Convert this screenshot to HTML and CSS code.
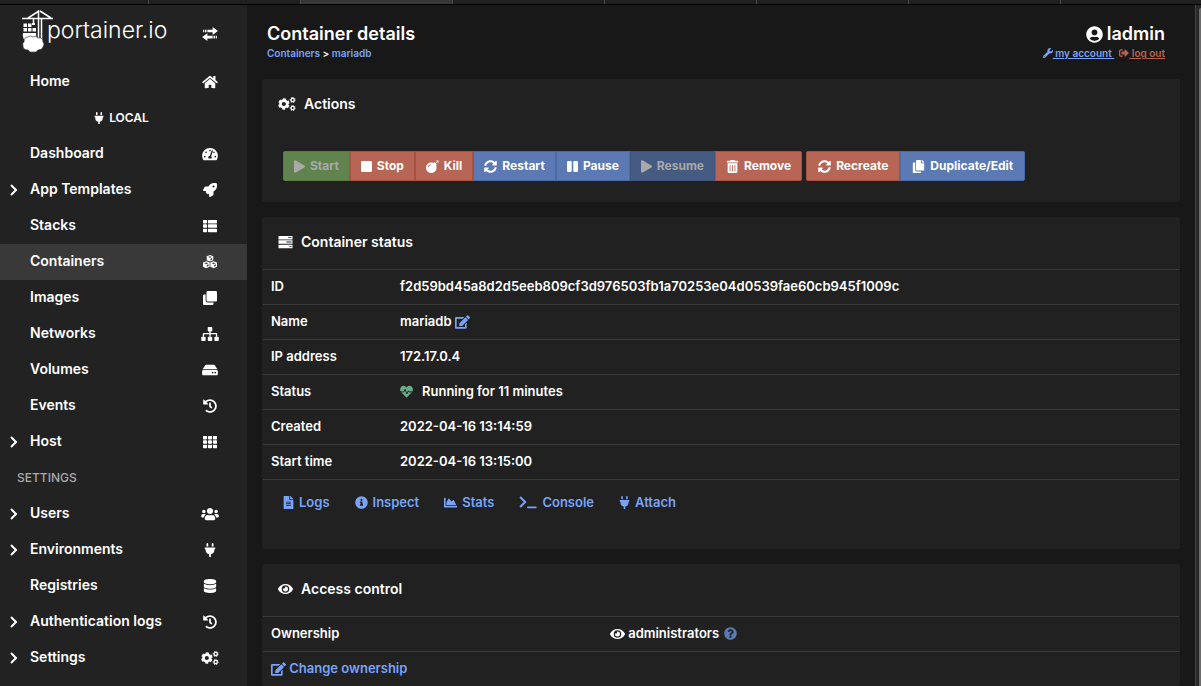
FILE: index.html
```html
<!DOCTYPE html>
<html lang="en">
<head>
<meta charset="utf-8">
<meta name="viewport" content="width=device-width, initial-scale=1">
<title>Container details - Portainer</title>
<link rel="stylesheet" href="styles.css">
</head>
<body>
<svg class="sprite" aria-hidden="true">
  <symbol id="plug" viewBox="0 0 384 512"><path d="M320,32a32,32,0,0,0-64,0v96h64Zm48,128H16A16,16,0,0,0,0,176v32a16,16,0,0,0,16,16H32v32A160.07,160.07,0,0,0,160,412.8V512h64V412.8A160.07,160.07,0,0,0,352,256V224h16a16,16,0,0,0,16-16V176A16,16,0,0,0,368,160ZM128,32a32,32,0,0,0-64,0v96h64Z"/></symbol>
  <symbol id="home" viewBox="0 0 576 512"><path d="M280.37 148.26L96 300.11V464a16 16 0 0 0 16 16l112.06-.29a16 16 0 0 0 15.92-16V368a16 16 0 0 1 16-16h64a16 16 0 0 1 16 16v95.64a16 16 0 0 0 16 16.05L464 480a16 16 0 0 0 16-16V300L295.67 148.26a12.19 12.19 0 0 0-15.3 0zM571.6 251.47L488 182.56V44.05a12 12 0 0 0-12-12h-56a12 12 0 0 0-12 12v72.61L318.47 43a48 48 0 0 0-61 0L4.34 251.47a12 12 0 0 0-1.6 16.9l25.5 31A12 12 0 0 0 45.15 301l235.22-193.74a12.19 12.19 0 0 1 15.3 0L530.9 301a12 12 0 0 0 16.9-1.6l25.5-31a12 12 0 0 0-1.7-16.93z"/></symbol>
  <symbol id="gauge" viewBox="0 0 576 512"><path d="M288 32C128.94 32 0 160.94 0 320c0 52.8 14.25 102.26 39.06 144.8 5.61 9.62 16.3 15.2 27.44 15.2h443c11.14 0 21.83-5.58 27.44-15.2C561.75 422.26 576 372.8 576 320c0-159.06-128.94-288-288-288zm0 64c14.71 0 26.58 10.13 30.32 23.65-1.11 2.26-2.64 4.23-3.45 6.67l-9.22 27.67c-5.13 3.49-10.97 6.01-17.64 6.01-17.67 0-32-14.33-32-32S270.33 96 288 96zM96 384c-17.67 0-32-14.33-32-32s14.33-32 32-32 32 14.33 32 32-14.33 32-32 32zm48-160c-17.67 0-32-14.33-32-32s14.33-32 32-32 32 14.33 32 32-14.33 32-32 32zm246.77-72.41l-61.33 184C343.13 347.33 352 364.54 352 384c0 11.72-3.38 22.55-8.88 32H232.88c-5.5-9.45-8.88-20.28-8.88-32 0-33.94 26.5-61.43 59.9-63.59l61.34-184.01c4.17-12.56 17.73-19.45 30.36-15.17 12.57 4.19 19.35 17.79 15.17 30.36zm14.66 57.2l15.52-46.55c3.47-1.29 7.13-2.23 11.05-2.23 17.67 0 32 14.33 32 32s-14.33 32-32 32c-11.38-.01-21.37-5.97-26.57-15.22zM480 384c-17.67 0-32-14.33-32-32s14.33-32 32-32 32 14.33 32 32-14.33 32-32 32z"/></symbol>
  <symbol id="rocket" viewBox="0 0 512 512"><path d="M505.12 19.09c-1.19-5.53-6.66-11-12.2-12.18C460.71 0 435.5 0 410.4 0 307.17 0 245.27 55.2 199.05 128H94.83c-16.34.01-35.55 11.87-42.88 26.48L2.51 253.29A28.4 28.4 0 0 0 0 264a24 24 0 0 0 24 24h103.81l-22.47 22.46c-11.36 11.37-13 32.26 0 45.25l50.9 50.91c11.16 11.19 32.16 13.16 45.28 0l22.47-22.46V488a24 24 0 0 0 24 24 28.56 28.56 0 0 0 10.71-2.51l98.73-49.39c14.63-7.3 26.51-26.5 26.51-42.86V312.79c72.6-46.31 128.03-108.4 128.03-211.09.1-25.2.1-50.4-6.85-82.61zM384.04 168A40 40 0 1 1 424.05 128a40.02 40.02 0 0 1-40.01 40z"/></symbol>
  <symbol id="list" viewBox="0 0 512 512"><path d="M24 32h101a24 24 0 0 1 24 24v80a24 24 0 0 1-24 24H24a24 24 0 0 1-24-24V56a24 24 0 0 1 24-24zM205 32h283a24 24 0 0 1 24 24v80a24 24 0 0 1-24 24H205a24 24 0 0 1-24-24V56a24 24 0 0 1 24-24zM24 192h101a24 24 0 0 1 24 24v80a24 24 0 0 1-24 24H24a24 24 0 0 1-24-24v-80a24 24 0 0 1 24-24zM205 192h283a24 24 0 0 1 24 24v80a24 24 0 0 1-24 24H205a24 24 0 0 1-24-24v-80a24 24 0 0 1 24-24zM24 352h101a24 24 0 0 1 24 24v80a24 24 0 0 1-24 24H24a24 24 0 0 1-24-24v-80a24 24 0 0 1 24-24zM205 352h283a24 24 0 0 1 24 24v80a24 24 0 0 1-24 24H205a24 24 0 0 1-24-24v-80a24 24 0 0 1 24-24z"/></symbol>
  <symbol id="grid" viewBox="0 0 512 512"><path d="M24 32h101a24 24 0 0 1 24 24v80a24 24 0 0 1-24 24H24a24 24 0 0 1-24-24V56a24 24 0 0 1 24-24zM205 32h102a24 24 0 0 1 24 24v80a24 24 0 0 1-24 24H205a24 24 0 0 1-24-24V56a24 24 0 0 1 24-24zM387 32h101a24 24 0 0 1 24 24v80a24 24 0 0 1-24 24H387a24 24 0 0 1-24-24V56a24 24 0 0 1 24-24zM24 192h101a24 24 0 0 1 24 24v80a24 24 0 0 1-24 24H24a24 24 0 0 1-24-24v-80a24 24 0 0 1 24-24zM205 192h102a24 24 0 0 1 24 24v80a24 24 0 0 1-24 24H205a24 24 0 0 1-24-24v-80a24 24 0 0 1 24-24zM387 192h101a24 24 0 0 1 24 24v80a24 24 0 0 1-24 24H387a24 24 0 0 1-24-24v-80a24 24 0 0 1 24-24zM24 352h101a24 24 0 0 1 24 24v80a24 24 0 0 1-24 24H24a24 24 0 0 1-24-24v-80a24 24 0 0 1 24-24zM205 352h102a24 24 0 0 1 24 24v80a24 24 0 0 1-24 24H205a24 24 0 0 1-24-24v-80a24 24 0 0 1 24-24zM387 352h101a24 24 0 0 1 24 24v80a24 24 0 0 1-24 24H387a24 24 0 0 1-24-24v-80a24 24 0 0 1 24-24z"/></symbol>
  <symbol id="cubes" viewBox="0 0 512 512"><path fill-rule="evenodd" d="M256 0l120 46v142l-120 54-120-54V46zM256 50l-70 25 70 26 70-26zM276 138v62l60-28v-60z"/><path fill-rule="evenodd" d="M122 232l122 46v148l-122 60L0 426V278zM122 278l-74 27 74 28 74-28zM142 368v66l60-32v-60z"/><path fill-rule="evenodd" d="M390 232l122 46v148l-122 60-122-60V278zM390 278l-74 27 74 28 74-28zM410 368v66l60-32v-60z"/></symbol>
  <symbol id="clone" viewBox="0 0 512 512"><path d="M464 0c26.51 0 48 21.49 48 48v288c0 26.51-21.49 48-48 48H176c-26.51 0-48-21.49-48-48V48c0-26.51 21.49-48 48-48h288M176 416c-44.112 0-80-35.888-80-80V128H48c-26.51 0-48 21.49-48 48v288c0 26.51 21.49 48 48 48h288c26.51 0 48-21.49 48-48v-48H176z"/></symbol>
  <symbol id="sitemap" viewBox="0 0 640 512"><rect x="236" width="168" height="160" rx="30"/><rect y="352" width="160" height="160" rx="30"/><rect x="240" y="352" width="160" height="160" rx="30"/><rect x="480" y="352" width="160" height="160" rx="30"/><path d="M80 360V256q0-14 14-14h452q14 0 14 14v104M320 150v210" fill="none" stroke="currentColor" stroke-width="48"/></symbol>
  <symbol id="drive" viewBox="0 0 576 512"><path d="M576 304v96c0 26.51-21.49 48-48 48H48c-26.51 0-48-21.49-48-48v-96c0-26.51 21.49-48 48-48h480c26.51 0 48 21.49 48 48zm-48-80a79.557 79.557 0 0 1 30.777 6.165L462.25 85.374A48.003 48.003 0 0 0 422.311 64H153.689a48 48 0 0 0-39.938 21.374L17.223 230.165A79.557 79.557 0 0 1 48 224h480zm-48 96c-17.673 0-32 14.327-32 32s14.327 32 32 32 32-14.327 32-32-14.327-32-32-32zm-96 0c-17.673 0-32 14.327-32 32s14.327 32 32 32 32-14.327 32-32-14.327-32-32-32z"/></symbol>
  <symbol id="history" viewBox="0 0 512 512"><path d="M504 255.531c.253 136.64-111.18 248.372-247.82 248.468-59.015.042-113.223-20.53-155.822-54.911-11.077-8.94-11.905-25.541-1.839-35.607l11.267-11.267c8.609-8.609 22.353-9.551 31.891-1.984C173.062 425.135 212.781 440 256 440c101.705 0 184-82.311 184-184 0-101.705-82.311-184-184-184-48.814 0-93.149 18.969-126.068 49.932l50.754 50.754c10.08 10.08 2.941 27.314-11.313 27.314H24c-8.837 0-16-7.163-16-16V38.627c0-14.254 17.234-21.393 27.314-11.314l49.372 49.372C129.209 34.136 189.552 8 256 8c136.81 0 247.747 110.78 248 247.531zm-180.912 78.784l9.823-12.63c8.138-10.463 6.253-25.542-4.21-33.679L288 256.349V152c0-13.255-10.745-24-24-24h-16c-13.255 0-24 10.745-24 24v135.651l65.409 50.874c10.463 8.137 25.541 6.253 33.679-4.21z"/></symbol>
  <symbol id="database" viewBox="0 0 448 512"><path d="M448 73.143v45.714C448 159.143 347.667 192 224 192S0 159.143 0 118.857V73.143C0 32.857 100.333 0 224 0s224 32.857 224 73.143zM448 176v102.857C448 319.143 347.667 352 224 352S0 319.143 0 278.857V176c48.125 33.143 136.208 48.572 224 48.572S399.874 209.143 448 176zm0 160v102.857C448 479.143 347.667 512 224 512S0 479.143 0 438.857V336c48.125 33.143 136.208 48.572 224 48.572S399.874 369.143 448 336z"/></symbol>
  <symbol id="users" viewBox="0 0 640 512"><path d="M96 224c35.3 0 64-28.7 64-64s-28.7-64-64-64-64 28.7-64 64 28.7 64 64 64zm448 0c35.3 0 64-28.7 64-64s-28.7-64-64-64-64 28.7-64 64 28.7 64 64 64zm32 32h-64c-17.6 0-33.5 7.1-45.1 18.6 40.3 22.1 68.9 62 75.1 109.4h66c17.7 0 32-14.3 32-32v-32c0-35.3-28.7-64-64-64zm-256 0c61.9 0 112-50.1 112-112S381.9 32 320 32 208 82.1 208 144s50.1 112 112 112zm76.8 32h-8.3c-20.8 10-43.9 16-68.5 16s-47.6-6-68.5-16h-8.3C179.6 288 128 339.6 128 403.2V432c0 26.5 21.5 48 48 48h288c26.5 0 48-21.5 48-48v-28.8c0-63.6-51.6-115.2-115.2-115.2zm-223.7-13.4C161.5 263.1 145.6 256 128 256H64c-35.3 0-64 28.7-64 64v32c0 17.7 14.3 32 32 32h65.9c6.3-47.4 34.9-87.3 75.2-109.4z"/></symbol>
  <symbol id="cogs" viewBox="0 0 640 512"><g fill="none" stroke="currentColor"><circle cx="204" cy="256" r="124" stroke-width="96"/><circle cx="204" cy="256" r="182" stroke-width="52" pathLength="12" stroke-dasharray="1.200 .8" stroke-dashoffset="-.4"/><circle cx="528" cy="108" r="60" stroke-width="46"/><circle cx="528" cy="108" r="92" stroke-width="34" pathLength="12" stroke-dasharray="1.200 .8" stroke-dashoffset=".6"/><circle cx="528" cy="404" r="60" stroke-width="46"/><circle cx="528" cy="404" r="92" stroke-width="34" pathLength="12" stroke-dasharray="1.200 .8" stroke-dashoffset=".6"/></g></symbol>
  <symbol id="play" viewBox="0 0 448 512"><path d="M424.4 214.7L72.4 6.6C43.8-10.3 0 6.1 0 47.9V464c0 37.5 40.7 60.1 72.4 41.3l352-208c31.4-18.5 31.5-64.1 0-82.6z"/></symbol>
  <symbol id="stop" viewBox="0 0 448 512"><rect y="32" width="448" height="448" rx="48"/></symbol>
  <symbol id="bomb" viewBox="0 0 512 512"><path d="M440.5 88.5l-52 52L415 167c9.4 9.4 9.4 24.6 0 33.9l-17.4 17.4c11.8 26.1 18.4 55.1 18.4 85.6 0 114.9-93.1 208-208 208S0 418.9 0 304 93.1 96 208 96c30.5 0 59.5 6.6 85.6 18.4L311 97c9.4-9.4 24.6-9.4 33.9 0l26.5 26.5 52-52 17.1 17zM112 272c0-35.3 28.7-64 64-64 8.8 0 16-7.2 16-16s-7.2-16-16-16c-52.9 0-96 43.100-96 96 0 8.800 7.200 16 16 16s16-7.200 16-16z"/><path d="M440 12v26M474 72h26M458 54l24-24M424 54l-18-18M458 90l18 18" stroke="currentColor" stroke-width="24" stroke-linecap="round"/></symbol>
  <symbol id="sync" viewBox="0 0 512 512"><path d="M370.72 133.28C339.458 104.008 298.888 87.962 255.848 88c-77.458.068-144.328 53.178-162.791 126.85-1.344 5.363-6.122 9.15-11.651 9.15H24.103c-7.498 0-13.194-6.807-11.807-14.176C33.933 94.924 134.813 8 256 8c66.448 0 126.791 26.136 171.315 68.685L463.03 40.97C478.149 25.851 504 36.559 504 57.941V192c0 13.255-10.745 24-24 24H345.941c-21.382 0-32.09-25.851-16.971-40.971l41.75-41.749zM32 296h134.059c21.382 0 32.09 25.851 16.971 40.971l-41.75 41.75c31.262 29.273 71.835 45.319 114.876 45.28 77.418-.07 144.315-53.144 162.787-126.849 1.344-5.363 6.122-9.15 11.651-9.15h57.304c7.498 0 13.194 6.807 11.807 14.176C478.067 417.076 377.187 504 256 504c-66.448 0-126.791-26.136-171.315-68.685L48.97 471.03C33.851 486.149 8 475.441 8 454.059V320c0-13.255 10.745-24 24-24z"/></symbol>
  <symbol id="pause" viewBox="0 0 448 512"><rect y="32" width="192" height="448" rx="48"/><rect x="256" y="32" width="192" height="448" rx="48"/></symbol>
  <symbol id="trash" viewBox="0 0 448 512"><path fill-rule="evenodd" d="M16 32h112l16-26q4-6 12-6h136q8 0 12 6l16 26h112q16 0 16 16v32q0 16-16 16H16Q0 96 0 80V48q0-16 16-16zM32 128h384v336q0 48-48 48H80q-48 0-48-48zM112 192v256h32V192zM208 192v256h32V192zM304 192v256h32V192z"/></symbol>
  <symbol id="copy" viewBox="0 0 448 512"><path d="M320 448v40c0 13.255-10.745 24-24 24H24c-13.255 0-24-10.745-24-24V120c0-13.255 10.745-24 24-24h72v296c0 30.879 25.121 56 56 56h168zm0-344V0H152c-13.255 0-24 10.745-24 24v368c0 13.255 10.745 24 24 24h272c13.255 0 24-10.745 24-24V128H344c-13.2 0-24-10.8-24-24zm120.971-31.029L375.029 7.029A24 24 0 0 0 358.059 0H352v96h96v-6.059a24 24 0 0 0-7.029-16.97z"/></symbol>
  <symbol id="user" viewBox="0 0 496 512"><path d="M248 8C111 8 0 119 0 256s111 248 248 248 248-111 248-248S385 8 248 8zm0 96c48.600 0 88 39.400 88 88s-39.400 88-88 88-88-39.400-88-88 39.400-88 88-88zm0 344c-58.700 0-111.300-26.600-146.500-68.200 18.800-35.400 55.600-59.800 98.500-59.800 2.400 0 4.800.4 7.100 1.100 13 4.200 26.600 6.900 40.900 6.900 14.300 0 28-2.700 40.900-6.900 2.300-.7 4.700-1.100 7.100-1.100 42.900 0 79.700 24.400 98.500 59.800C359.300 421.400 306.700 448 248 448z"/></symbol>
  <symbol id="wrench" viewBox="0 0 512 512"><path d="M507.73 109.1c-2.24-9.03-13.54-12.09-20.12-5.51l-74.36 74.36-67.88-11.31-11.31-67.88 74.36-74.36c6.62-6.62 3.43-17.9-5.66-20.16-47.38-11.74-99.55.91-136.58 37.93-39.64 39.64-50.55 97.1-34.05 147.2L18.74 402.76c-24.99 24.99-24.99 65.51 0 90.5 24.99 24.99 65.51 24.99 90.5 0l213.21-213.21c50.12 16.71 107.47 5.68 147.37-34.22 37.07-37.07 49.7-89.32 37.91-136.73zM64 472c-13.25 0-24-10.75-24-24 0-13.26 10.75-24 24-24s24 10.740 24 24c0 13.250-10.750 24-24 24z"/></symbol>
  <symbol id="signout" viewBox="0 0 512 512"><path d="M497 273L329 441c-15 15-41 4.500-41-17v-96H152c-13.300 0-24-10.700-24-24v-96c0-13.300 10.700-24 24-24h136V88c0-21.400 25.900-32 41-17l168 168c9.300 9.400 9.300 24.600 0 34zM192 436v-40c0-6.600-5.400-12-12-12H96c-17.700 0-32-14.300-32-32V160c0-17.700 14.300-32 32-32h84c6.600 0 12-5.400 12-12V76c0-6.600-5.400-12-12-12H96c-53 0-96 43-96 96v192c0 53 43 96 96 96h84c6.600 0 12-5.400 12-12z"/></symbol>
  <symbol id="edit" viewBox="0 0 576 512"><path d="M402.600 83.200l90.200 90.200c3.800 3.800 3.800 10 0 13.800L274.400 405.600l-92.800 10.300c-12.400 1.400-22.900-9.100-21.500-21.500l10.300-92.800L388.800 83.200c3.800-3.800 10-3.800 13.800 0zm162-22.900l-48.800-48.800c-15.200-15.200-39.900-15.200-55.200 0l-35.400 35.400c-3.800 3.800-3.800 10 0 13.800l90.200 90.200c3.800 3.800 10 3.800 13.800 0l35.400-35.400c15.200-15.300 15.200-40 0-55.200zM384 346.200V448H64V128h229.800c3.200 0 6.200-1.300 8.500-3.500l40-40c7.600-7.600 2.200-20.500-8.500-20.500H48C21.500 64 0 85.500 0 112v352c0 26.500 21.500 48 48 48h352c26.500 0 48-21.500 48-48V306.200c0-10.700-12.900-16-20.500-8.500l-40 40c-2.200 2.300-3.500 5.300-3.500 8.500z"/></symbol>
  <symbol id="heart" viewBox="0 0 512 512"><path d="M256 96C190 10 90 20 40 80-10 140-8 220 36 272l204 210q16 14 32 0l204-210c44-52 46-132-4-192C422 20 322 10 256 96z"/><path d="M0 272h150l50-100 70 180 60-120 22 40h160" fill="none" stroke="#212121" stroke-width="38"/></symbol>
  <symbol id="file" viewBox="0 0 384 512"><path d="M224 136V0H24C10.700 0 0 10.700 0 24v464c0 13.300 10.700 24 24 24h336c13.300 0 24-10.700 24-24V160H248c-13.200 0-24-10.800-24-24zm64 236c0 6.600-5.400 12-12 12H108c-6.600 0-12-5.400-12-12v-8c0-6.600 5.400-12 12-12h168c6.600 0 12 5.400 12 12v8zm0-64c0 6.600-5.400 12-12 12H108c-6.600 0-12-5.400-12-12v-8c0-6.600 5.400-12 12-12h168c6.600 0 12 5.400 12 12v8zm0-72v8c0 6.600-5.400 12-12 12H108c-6.600 0-12-5.400-12-12v-8c0-6.600 5.400-12 12-12h168c6.600 0 12 5.400 12 12zm96-114.100v6.100H256V0h6.100c6.400 0 12.500 2.500 17 7l97.900 98c4.500 4.500 7 10.600 7 16.900z"/></symbol>
  <symbol id="info" viewBox="0 0 512 512"><path fill-rule="evenodd" d="M256 8a248 248 0 1 1 0 496 248 248 0 0 1 0-496zM256 110a42 42 0 1 0 0 84 42 42 0 0 0 0-84zM204 216q-12 0-12 12v24q0 12 12 12h12v64h-12q-12 0-12 12v32q0 12 12 12h104q12 0 12-12v-32q0-12-12-12h-12V228q0-12-12-12z"/></symbol>
  <symbol id="help" viewBox="0 0 512 512"><path d="M504 256c0 136.997-111.043 248-248 248S8 392.997 8 256C8 119.083 119.043 8 256 8s248 111.083 248 248zM262.655 90c-54.497 0-89.255 22.957-116.549 63.758-3.536 5.286-2.353 12.415 2.715 16.258l34.699 26.310c5.205 3.947 12.621 3.008 16.665-2.122 17.864-22.658 30.113-35.797 57.303-35.797 20.429 0 45.698 13.148 45.698 32.958 0 14.976-12.363 22.667-32.534 33.976C247.128 238.528 216 254.941 216 296v4c0 6.627 5.373 12 12 12h56c6.627 0 12-5.373 12-12v-1.333c0-28.462 83.186-29.647 83.186-106.667 0-58.002-60.165-102-116.531-102zM256 338c-25.365 0-46 20.635-46 46 0 25.364 20.635 46 46 46s46-20.636 46-46c0-25.365-20.635-46-46-46z"/></symbol>
  <symbol id="chart" viewBox="0 0 512 512"><path d="M500 384c6.600 0 12 5.400 12 12v40c0 6.600-5.400 12-12 12H12c-6.600 0-12-5.400-12-12V76c0-6.600 5.400-12 12-12h40c6.600 0 12 5.400 12 12v308h436zM372.700 159.500L288 216l-85.300-113.700c-5.100-6.800-15.500-6.300-19.900 1L96 248v104h384l-89.900-187.800c-3.200-6.500-11.400-8.700-17.400-4.700z"/></symbol>
  <symbol id="console" viewBox="0 0 640 512"><path d="M32 72l184 184L32 440" fill="none" stroke="currentColor" stroke-width="72"/><rect x="288" y="416" width="344" height="64" rx="20"/></symbol>
  <symbol id="eye" viewBox="0 0 576 512"><path d="M572.52 241.4C518.29 135.59 410.93 64 288 64S57.68 135.64 3.48 241.41a32.35 32.35 0 0 0 0 29.19C57.71 376.41 165.07 448 288 448s230.32-71.64 284.52-177.41a32.35 32.35 0 0 0 0-29.19zM288 400a144 144 0 1 1 144-144 143.93 143.93 0 0 1-144 144zm0-240a95.31 95.31 0 0 0-25.31 3.79 47.85 47.85 0 0 1-66.9 66.9A95.78 95.78 0 1 0 288 160z"/></symbol>
  <symbol id="server" viewBox="0 0 512 512"><path fill-rule="evenodd" d="M0 32h512v128H0zM352 80v32h128V80zM0 192h512v128H0zM288 240v32h192v-32zM0 352h512v128H0zM400 400v32h80v-32z"/></symbol>
  <symbol id="chevron" viewBox="0 0 8 12"><path d="M1 1l5 5-5 5" fill="none" stroke="currentColor" stroke-width="2"/></symbol>
  <symbol id="swap" viewBox="0 0 18 16"><path d="M1 3h1v3H1zM3 3h2v3H3zM6 3h6V0l6 4.500L12 9V6H6zM17 10h-1v3h1zM15 10h-2v3h2zM12 10H6V7l-6 4.500L6 16v-3h6z"/></symbol>
  <symbol id="crane" viewBox="0 0 32 44"><path d="M0 9.500h31M16.500 1v29M19.500 9v21M17 2L6 9M18 2l11 7M11.500 10v4" fill="none" stroke="currentColor" stroke-width="1.500"/><path d="M1.500 14.500h3.500v3.500H1.500zM6 14.500h3.500v3.500H6zM1.500 19h3.500v3.500H1.500zM6 19h3.500v3.500H6zM10.500 19H14v3.500h-3.500zM10 14h3v2h-3zM1 24h13q1 4-1 8H3q-3-4-2-8z"/><path d="M6 28q2-2 5 0 3-2 5 1 5-1 5 4 2 2 0 5-1 3-5 3-2 3-5 2-3 1-5-2-5 0-5-4-1-3 1-4 0-5 4-5z" stroke="#222" stroke-width=".6"/></symbol>
</svg>

<div class="app">
  <div class="tabs" aria-hidden="true"><i></i><i></i><i class="tab-on"></i><i></i><i></i><i></i><i></i><i></i></div>

  <aside class="sidebar">
    <div class="brand">
      <a class="logo" href="#"><svg class="logo-mark"><use href="#crane"/></svg><span class="logo-text">portainer.io</span></a>
      <button class="toggle" aria-label="Toggle sidebar"><svg class="icon-wide"><use href="#swap"/></svg></button>
    </div>
    <nav class="menu">
      <a class="item" href="#"><span class="label">Home</span><svg class="icon-nav"><use href="#home"/></svg></a>
      <div class="endpoint"><svg class="icon-small"><use href="#plug"/></svg>LOCAL</div>
      <a class="item" href="#"><span class="label">Dashboard</span><svg class="icon-nav"><use href="#gauge"/></svg></a>
      <a class="item" href="#"><svg class="chevron"><use href="#chevron"/></svg><span class="label">App Templates</span><svg class="icon-nav"><use href="#rocket"/></svg></a>
      <a class="item" href="#"><span class="label">Stacks</span><svg class="icon-nav"><use href="#list"/></svg></a>
      <a class="item active" href="#"><span class="label">Containers</span><svg class="icon-nav"><use href="#cubes"/></svg></a>
      <a class="item" href="#"><span class="label">Images</span><svg class="icon-nav"><use href="#clone"/></svg></a>
      <a class="item" href="#"><span class="label">Networks</span><svg class="icon-nav"><use href="#sitemap"/></svg></a>
      <a class="item" href="#"><span class="label">Volumes</span><svg class="icon-nav"><use href="#drive"/></svg></a>
      <a class="item" href="#"><span class="label">Events</span><svg class="icon-nav"><use href="#history"/></svg></a>
      <a class="item" href="#"><svg class="chevron"><use href="#chevron"/></svg><span class="label">Host</span><svg class="icon-nav"><use href="#grid"/></svg></a>
      <div class="section">SETTINGS</div>
      <a class="item" href="#"><svg class="chevron"><use href="#chevron"/></svg><span class="label">Users</span><svg class="icon-nav"><use href="#users"/></svg></a>
      <a class="item" href="#"><svg class="chevron"><use href="#chevron"/></svg><span class="label">Environments</span><svg class="icon-nav"><use href="#plug"/></svg></a>
      <a class="item" href="#"><span class="label">Registries</span><svg class="icon-nav"><use href="#database"/></svg></a>
      <a class="item" href="#"><svg class="chevron"><use href="#chevron"/></svg><span class="label">Authentication logs</span><svg class="icon-nav"><use href="#history"/></svg></a>
      <a class="item" href="#"><svg class="chevron"><use href="#chevron"/></svg><span class="label">Settings</span><svg class="icon-nav"><use href="#cogs"/></svg></a>
    </nav>
  </aside>

  <main class="content">
    <header class="page-head">
      <div>
        <h1 class="title">Container details</h1>
        <div class="crumbs"><a href="#">Containers</a> &gt; <a href="#">mariadb</a></div>
      </div>
      <div class="account">
        <div class="title user"><svg class="icon-user"><use href="#user"/></svg>ladmin</div>
        <div class="account-links">
          <a href="#"><svg class="icon-tiny"><use href="#wrench"/></svg><span> my account </span></a>
          <a class="danger" href="#"><svg class="icon-tiny"><use href="#signout"/></svg><span> log out</span></a>
        </div>
      </div>
    </header>

    <section class="panel">
      <h2 class="panel-title"><svg class="icon-wide"><use href="#cogs"/></svg>Actions</h2>
      <div class="toolbar">
        <div class="group">
          <button class="btn green" disabled><svg class="icon-slim"><use href="#play"/></svg>Start</button>
          <button class="btn red"><svg class="icon-slim"><use href="#stop"/></svg>Stop</button>
          <button class="btn red"><svg class="icon"><use href="#bomb"/></svg>Kill</button>
          <button class="btn blue"><svg class="icon"><use href="#sync"/></svg>Restart</button>
          <button class="btn blue"><svg class="icon-slim"><use href="#pause"/></svg>Pause</button>
          <button class="btn blue" disabled><svg class="icon-slim"><use href="#play"/></svg>Resume</button>
          <button class="btn red"><svg class="icon"><use href="#trash"/></svg>Remove</button>
        </div>
        <div class="group roomy">
          <button class="btn red"><svg class="icon"><use href="#sync"/></svg>Recreate</button>
          <button class="btn blue"><svg class="icon"><use href="#copy"/></svg>Duplicate/Edit</button>
        </div>
      </div>
    </section>

    <section class="panel">
      <h2 class="panel-title"><svg class="icon-medium"><use href="#server"/></svg>Container status</h2>
      <table class="details">
        <tr><th scope="row">ID</th><td>f2d59bd45a8d2d5eeb809cf3d976503fb1a70253e04d0539fae60cb945f1009c</td></tr>
        <tr><th scope="row">Name</th><td>mariadb <a href="#" aria-label="Rename"><svg class="icon-medium"><use href="#edit"/></svg></a></td></tr>
        <tr><th scope="row">IP address</th><td>172.17.0.4</td></tr>
        <tr><th scope="row">Status</th><td><svg class="icon health"><use href="#heart"/></svg>Running for 11 minutes</td></tr>
        <tr><th scope="row">Created</th><td>2022-04-16 13:14:59</td></tr>
        <tr><th scope="row">Start time</th><td>2022-04-16 13:15:00</td></tr>
      </table>
      <div class="quick">
        <a href="#"><svg class="icon-slim"><use href="#file"/></svg>Logs</a>
        <a href="#"><svg class="icon"><use href="#info"/></svg>Inspect</a>
        <a href="#"><svg class="icon"><use href="#chart"/></svg>Stats</a>
        <a href="#"><svg class="icon-wide"><use href="#console"/></svg>Console</a>
        <a href="#"><svg class="icon-slim"><use href="#plug"/></svg>Attach</a>
      </div>
    </section>

    <section class="panel">
      <h2 class="panel-title"><svg class="icon-medium"><use href="#eye"/></svg>Access control</h2>
      <table class="details access">
        <tr><th scope="row">Ownership</th><td><svg class="icon-medium"><use href="#eye"/></svg> administrators <svg class="icon help"><use href="#help"/></svg></td></tr>
        <tr><td colspan="2"><a href="#"><svg class="icon-medium"><use href="#edit"/></svg> Change ownership</a></td></tr>
      </table>
    </section>
  </main>
  <div class="rail" aria-hidden="true"><i class="thumb"></i></div>
</div>
</body>
</html>
```
FILE: styles.css
```css
* { box-sizing: border-box; }

body {
  margin: 0;
  background: #181818;
  color: #fff;
  font: 600 13px/20px Inter, "Liberation Sans", sans-serif;
}

a { color: #7aa3f7; text-decoration: none; }
svg { fill: currentColor; flex: none; vertical-align: middle; }
button { font: inherit; color: inherit; }

.sprite { position: absolute; width: 0; height: 0; }

.icon { width: 13px; height: 13px; }
.icon-medium { width: 15px; height: 14px; }
.icon-wide { width: 18px; height: 14px; }
.icon-slim { width: 11px; height: 13px; }
.icon-small { width: 10px; height: 12px; }
.icon-tiny { width: 10px; height: 10px; }
.icon-user { width: 17px; height: 17px; }

.app {
  display: grid;
  grid-template: 5px 1fr / 247px 1fr 6px;
  height: 100vh;
  overflow: hidden;
}

.tabs {
  grid-column: 1 / -1;
  display: flex;
  background: #202020;
  border-bottom: 1px solid #000;
}
.tabs i { flex: 0 0 152px; border-right: 1px solid #4a4a4a; }
.tabs i:first-child { flex-basis: 149px; }
.tabs i:last-child { flex: 1; border: 0; }
.tabs .tab-on { background: #373737; }

.sidebar { background: #222; overflow: hidden; }
.brand {
  display: flex;
  justify-content: space-between;
  height: 59px;
  padding: 4px 28px 0 22px;
}
.logo { display: flex; color: #fff; }
.logo-mark { width: 32px; height: 44px; }
.logo-text { margin-left: -7px; font-size: 23px; font-weight: 300; line-height: 42px; }
.toggle { height: 48px; padding: 0; background: none; border: 0; }

.menu { font-size: 14px; }
.item {
  display: flex;
  align-items: center;
  position: relative;
  height: 36px;
  padding: 0 28px 2px 30px;
  color: #fff;
}
.item.active { background: #393939; }
.label { flex: 1; }
.icon-nav { width: 18px; height: 14px; margin-top: 2px; }
.chevron { position: absolute; left: 10px; top: 12px; width: 8px; height: 12px; }
.endpoint {
  display: flex;
  align-items: center;
  justify-content: center;
  gap: 5px;
  height: 36px;
  padding-right: 4px;
  font-size: 12px;
}
.section { height: 36px; padding-left: 17px; color: #aaa; font-size: 12px; font-weight: 500; line-height: 36px; }

.content { padding: 17px 15px 0; overflow: hidden; }
.page-head {
  display: flex;
  justify-content: space-between;
  padding: 0 15px 19px 5px;
}
.title { margin: 0; font-size: 18px; font-weight: 600; line-height: 24px; }
.crumbs, .account-links { font-size: 10px; line-height: 14px; }
.account { text-align: right; }
.user { display: flex; align-items: center; justify-content: flex-end; gap: 4px; }
.account-links { display: flex; gap: 5px; }
.account-links a { display: flex; align-items: center; }
.account-links span { white-space: pre; text-decoration: underline; }
.account-links .danger { color: #b96452; }

.panel {
  margin-bottom: 15px;
  padding: 0 1px;
  background: #212121;
  border-radius: 2px;
}
.panel-title {
  display: flex;
  align-items: center;
  gap: 8px;
  height: 52px;
  margin: 0;
  padding: 0 15px 2px;
  font-size: 14px;
  font-weight: 600;
}

.toolbar { display: flex; gap: 4px; padding: 20px 20px 21px; }
.group { display: flex; border-radius: 3px; overflow: hidden; }
.btn {
  display: flex;
  align-items: center;
  gap: 5px;
  height: 30px;
  padding: 0 10px;
  border: 1px solid;
  font-size: 12px;
  font-weight: 700;
}
.roomy .btn { padding: 0 11px; }
.green { background: #61834e; border-color: #567a43; }
.red { background: #b76554; border-color: #a9503f; }
.blue { background: #5b79b2; border-color: #4a69a5; }
.btn:disabled { color: #a9a9a9; }
.blue:disabled { background: #465b82; border-color: #40557d; }

.details { width: 100%; border-collapse: separate; border-spacing: 0; }
.details th, .details td {
  height: 35px;
  padding: 0 8px 3px;
  border-top: 1px solid #3b3b3b;
  text-align: left;
  font-weight: 600;
}
.details th { width: 129px; }
.access th { width: 37%; }
.health { margin-right: 9px; color: #69aa8a; }
.help { margin-left: 2px; color: #5b79b2; }

.quick {
  display: flex;
  gap: 25px;
  height: 70px;
  padding: 12px 20px 0;
  border-top: 1px solid #3b3b3b;
}
.quick a { display: flex; align-items: center; gap: 5px; height: 20px; }

.rail { background: #292929; border-left: 1px solid #444; padding: 3px 0 0 3px; }
.thumb { display: block; height: 100%; background: #6b6b6b; border-radius: 3px 0 0 0; }
```
